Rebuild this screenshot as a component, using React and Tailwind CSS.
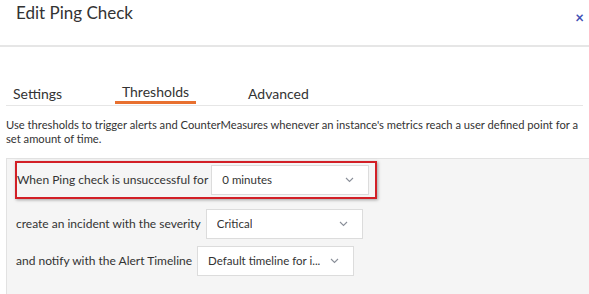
import React from "react";

const Chevron = () => (
  <svg width="9" height="6" viewBox="0 0 9 6" className="shrink-0">
    <path d="M1 1l3.5 3.5L8 1" fill="none" stroke="#8a8f99" strokeWidth="1.1" />
  </svg>
);

const Select = ({ value, width }) => (
  <div
    className={`flex items-center justify-between h-[30px] bg-white border border-[#dcdcdc] pl-[10px] pr-[14px] text-[11.5px] text-[#333] ${width}`}
  >
    <span className="truncate">{value}</span>
    <Chevron />
  </div>
);

const App = () => {
  return (
    <div className="w-[589px] h-[294px] overflow-hidden bg-white font-['Lato',sans-serif] text-[#333]">
      {/* header */}
      <div className="flex items-start justify-between h-[47px] border-b-2 border-[#e6e6e6]">
        <h1 className="pl-[16px] text-[17px] leading-[26px] text-[#333]">Edit Ping Check</h1>
        <button className="mt-[10px] mr-[5px] text-[#3f51b5] text-[15px] font-bold leading-none">×</button>
      </div>

      {/* tabs */}
      <div className="mx-[6px] mt-[38px] flex items-end h-[21px] border-b border-[#e6e6e6] text-[14px]">
        <div className="pl-[7px] w-[109px] pb-[1px]">Settings</div>
        <div className="w-[81px] -mb-px pb-[1px] border-b-[3px] border-[#e8702f] text-center leading-[17px] relative -top-[2px]">
          Thresholds
        </div>
        <div className="pl-[52px] pb-[1px]">Advanced</div>
      </div>

      <p className="px-[6px] mt-[12px] text-[11.2px] leading-[14px] text-[#333]">
        Use thresholds to trigger alerts and CounterMeasures whenever an instance's metrics reach a user defined point for a
        set amount of time.
      </p>

      {/* panel */}
      <div className="ml-[6px] mt-[12px] h-[200px] bg-[#f5f5f5] border-t border-l border-[#e2e2e2] pt-[2px] pl-[8px] text-[12px] whitespace-nowrap">
        <div className="w-[362px] h-[38px] border-2 border-[#d21f26] shadow-[1px_1px_3px_rgba(0,0,0,0.35)] flex items-center gap-[3px]">
          <span>When Ping check is unsuccessful for</span>
          <Select value="0 minutes" width="w-[158px]" />
        </div>
        <div className="flex items-center gap-[5px] mt-[10px] pl-[1px]">
          <span>create an incident with the severity</span>
          <Select value="Critical" width="w-[157px]" />
        </div>
        <div className="flex items-center gap-[5px] mt-[7px] pl-[1px]">
          <span>and notify with the Alert Timeline</span>
          <Select value="Default timeline for i..." width="w-[157px]" />
        </div>
      </div>
    </div>
  );
};

export default App;
